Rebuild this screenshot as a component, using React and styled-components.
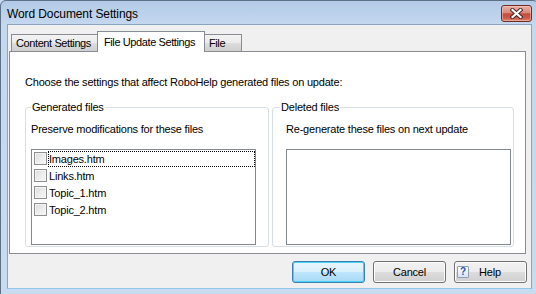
import React from 'react'
import styled, { createGlobalStyle } from 'styled-components'

const GlobalStyle = createGlobalStyle`
  html, body {
    margin: 0;
    padding: 0;
  }
  body {
    width: 536px;
    height: 294px;
    overflow: hidden;
    background: #c6d9ee;
    font-family: "Liberation Sans", Arial, sans-serif;
    font-size: 11px;
    letter-spacing: -0.2px;
    color: #000;
  }
`

const Window = styled.div`
  width: 539px;
  height: 300px;
  box-sizing: border-box;
  border: 1px solid #5d7189;
  border-radius: 6px 6px 0 0;
  background: linear-gradient(to bottom, #b3cbe7 0px, #c4d8ee 24px, #c8dbef 100%);
  padding: 0 6px;
  display: flex;
  flex-direction: column;
`

const TitleBar = styled.div`
  height: 23px;
  display: flex;
  align-items: flex-start;
`

const Title = styled.div`
  margin-top: 6px;
  font-size: 12px;
  line-height: 14px;
  letter-spacing: -0.1px;
  color: #000;
`

const CloseButton = styled.div`
  margin-left: auto;
  margin-top: 4px;
  width: 31px;
  height: 17px;
  box-sizing: border-box;
  border: 1px solid #6e2b22;
  border-radius: 3px;
  background: linear-gradient(
    to bottom,
    #eab0a3 0%,
    #db8877 45%,
    #c54c3a 52%,
    #cc5a47 80%,
    #de8672 100%
  );
  box-shadow: inset 0 0 0 1px rgba(255, 220, 210, 0.45);
  display: flex;
  align-items: center;
  justify-content: center;
`

const Client = styled.div`
  height: 265px;
  border: 1px solid #8ca3bc;
  border-bottom-color: #94c8ea;
  background: #f0f0f0;
  padding-top: 6px;
  box-sizing: border-box;
  display: flex;
  flex-direction: column;
`

const TabStrip = styled.div`
  height: 20px;
  padding-left: 3px;
  display: flex;
  align-items: flex-end;
`

const Tab = styled.div`
  box-sizing: border-box;
  width: ${p => p.$w}px;
  height: ${p => (p.$active ? 21 : 17)}px;
  margin-bottom: ${p => (p.$active ? -1 : 0)}px;
  border: 1px solid #898c95;
  border-bottom: none;
  ${p => p.$noLeft && 'border-left: none;'}
  ${p => p.$noRight && 'border-right: none;'}
  background: ${p =>
    p.$active
      ? '#fff'
      : 'linear-gradient(to bottom, #f3f3f3 0%, #ebebeb 50%, #dddddd 51%, #cfcfcf 100%)'};
  ${p => p.$active && 'position: relative; z-index: 1;'}
  padding-top: ${p => (p.$active ? 4 : 2)}px;
  padding-left: ${p => p.$pl}px;
  line-height: 13px;
  letter-spacing: -0.4px;
  white-space: nowrap;
`

const Panel = styled.div`
  margin-left: 1px;
  width: 517px;
  height: 203px;
  box-sizing: border-box;
  border: 1px solid #898c95;
  background: #fff;
  padding: 24px 11px 0 15px;
  display: flex;
  flex-direction: column;
`

const Text = styled.div`
  line-height: 13px;
  white-space: nowrap;
  margin-top: ${p => p.$mt || 0}px;
`

const GroupRow = styled.div`
  margin-top: 12px;
  display: flex;
  gap: 3px;
`

const Group = styled.fieldset`
  margin: 0;
  width: ${p => p.$w}px;
  height: 146px;
  box-sizing: border-box;
  border: 1px solid #d5dfe5;
  border-radius: 3px;
  padding: 0 0 0 ${p => p.$pad}px;
  min-inline-size: 0;
`

const Legend = styled.legend`
  padding: 0 1px;
  line-height: 13px;
`

const GroupBody = styled.div`
  margin-left: ${p => p.$inset}px;
  display: flex;
  flex-direction: column;
`

const ListBox = styled.div`
  margin-top: 13px;
  width: 225px;
  height: 96px;
  box-sizing: border-box;
  border: 1px solid #828790;
  background: #fff;
  padding: 1px 0 0 2px;
  display: flex;
  flex-direction: column;
`

const ListItem = styled.div`
  height: 17px;
  display: flex;
  align-items: flex-start;
`

const Check = styled.div`
  margin-top: 1px;
  width: 13px;
  height: 13px;
  box-sizing: border-box;
  border: 1px solid #8f8f8f;
  background: linear-gradient(135deg, #dcdcdc 0%, #eeeeee 60%, #f8f8f8 100%);
  box-shadow: inset 0 0 0 1px #f4f4f4;
  margin-right: 1px;
  flex: none;
`

const ItemLabel = styled.div`
  flex: 1;
  height: 16px;
  box-sizing: border-box;
  border: 1px dotted ${p => (p.$focus ? '#000' : 'transparent')};
  line-height: 14px;
  white-space: nowrap;
`

const ButtonRow = styled.div`
  margin-top: 7px;
  padding-right: 4px;
  display: flex;
  justify-content: flex-end;
  gap: 8px;
`

const Button = styled.div`
  width: 73px;
  height: 22px;
  box-sizing: border-box;
  border: 1px solid ${p => (p.$default ? '#3c7fb1' : '#707070')};
  border-radius: 3px;
  background: ${p =>
    p.$default
      ? 'linear-gradient(to bottom, #eaf6fd 0%, #d9f0fc 50%, #bee6fd 51%, #a7d9f5 100%)'
      : 'linear-gradient(to bottom, #f2f2f2 0%, #ebebeb 50%, #dddddd 51%, #cfcfcf 100%)'};
  box-shadow: inset 0 0 0 1px ${p => (p.$default ? '#48d3f9' : '#fcfcfc')};
  display: flex;
  align-items: center;
  justify-content: ${p => (p.$icon ? 'flex-start' : 'center')};
  padding-left: ${p => (p.$icon ? 2 : 0)}px;
  line-height: 13px;
`

const HelpIcon = styled.div`
  width: 12px;
  height: 12px;
  box-sizing: border-box;
  border: 1px solid #8e9fb3;
  border-radius: 1px;
  background: linear-gradient(to bottom, #ffffff, #d6e4f3);
  color: #1f56b8;
  font-weight: bold;
  font-size: 10px;
  line-height: 10px;
  text-align: center;
  margin-right: 10px;
`

const files = ['Images.htm', 'Links.htm', 'Topic_1.htm', 'Topic_2.htm']

function CloseGlyph() {
  return (
    <svg width="13" height="11" viewBox="0 0 13 11">
      <path d="M2.5 2 L10.5 9 M10.5 2 L2.5 9" stroke="#3d2a27" strokeWidth="4" strokeLinecap="square" />
      <path d="M2.5 2 L10.5 9 M10.5 2 L2.5 9" stroke="#fff" strokeWidth="2.2" strokeLinecap="square" />
    </svg>
  )
}

export default function App() {
  return (
    <>
      <GlobalStyle />
      <Window>
        <TitleBar>
          <Title>Word Document Settings</Title>
          <CloseButton>
            <CloseGlyph />
          </CloseButton>
        </TitleBar>
        <Client>
          <TabStrip>
            <Tab $w={86} $pl={4} $noRight>Content Settings</Tab>
            <Tab $w={108} $pl={6} $active>File Update Settings</Tab>
            <Tab $w={37} $pl={4} $noLeft>File</Tab>
          </TabStrip>
          <Panel>
            <Text>Choose the settings that affect RoboHelp generated files on update:</Text>
            <GroupRow>
              <Group $w={244} $pad={5}>
                <Legend>Generated files</Legend>
                <GroupBody $inset={0}>
                  <Text $mt={9}>Preserve modifications for these files</Text>
                  <ListBox>
                    {files.map((f, i) => (
                      <ListItem key={f}>
                        <Check />
                        <ItemLabel $focus={i === 0}>{f}</ItemLabel>
                      </ListItem>
                    ))}
                  </ListBox>
                </GroupBody>
              </Group>
              <Group $w={242} $pad={7}>
                <Legend>Deleted files</Legend>
                <GroupBody $inset={6}>
                  <Text $mt={9}>Re-generate these files on next update</Text>
                  <ListBox />
                </GroupBody>
              </Group>
            </GroupRow>
          </Panel>
          <ButtonRow>
            <Button $default>OK</Button>
            <Button>Cancel</Button>
            <Button $icon>
              <HelpIcon>?</HelpIcon>
              Help
            </Button>
          </ButtonRow>
        </Client>
      </Window>
    </>
  )
}
